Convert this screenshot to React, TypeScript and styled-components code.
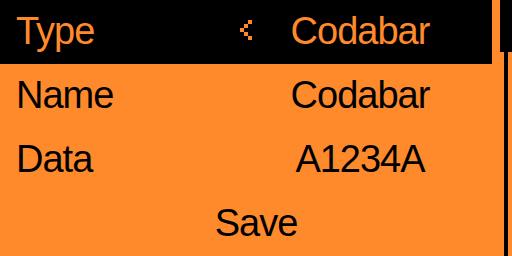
import * as React from 'react'
import styled, { createGlobalStyle, css } from 'styled-components'

const ORANGE = '#fe8a2c'
const BLACK = '#000000'

const GlobalStyle = createGlobalStyle`
	html, body {
		margin: 0;
		padding: 0;
		background: ${ORANGE};
	}
`

const Screen = styled.div`
	width: 512px;
	height: 256px;
	background: ${ORANGE};
	display: flex;
	gap: 8px;
	overflow: hidden;
	font-family: 'Liberation Sans', Arial, sans-serif;
	font-size: 38px;
	letter-spacing: -1px;
`

const List = styled.div`
	width: 492px;
	display: flex;
	flex-direction: column;
`

interface RowProps {
	selected?: boolean
}

const Row = styled.div`
	height: 64px;
	display: flex;
	align-items: stretch;
	line-height: 62px;
	${({ selected }: RowProps) => css`
		background: ${selected ? BLACK : 'transparent'};
		color: ${selected ? ORANGE : BLACK};
	`}
`

const Label = styled.div`
	width: 224px;
	padding-left: 16px;
	white-space: nowrap;
`

const ArrowSlot = styled.div`
	width: 12px;
	display: flex;
	align-items: flex-start;
	padding-top: 20px;
`

const Value = styled.div`
	width: 216px;
	text-align: center;
	white-space: nowrap;
`

const Action = styled.div`
	flex: 1;
	text-align: center;
	padding-left: 20px;
	white-space: nowrap;
`

const Scrollbar = styled.div`
	width: 12px;
	display: flex;
	flex-direction: column;
	align-items: center;
`

const Thumb = styled.div`
	width: 12px;
	height: 52px;
	background: ${BLACK};
`

const Track = styled.div`
	width: 4px;
	flex: 1;
	background: ${BLACK};
`

const LeftArrow = () => (
	<svg width="12" height="20" viewBox="0 0 12 20" shapeRendering="crispEdges">
		<rect x="8" y="0" width="4" height="4" fill={ORANGE} />
		<rect x="4" y="4" width="4" height="4" fill={ORANGE} />
		<rect x="0" y="8" width="4" height="4" fill={ORANGE} />
		<rect x="4" y="12" width="4" height="4" fill={ORANGE} />
		<rect x="8" y="16" width="4" height="4" fill={ORANGE} />
	</svg>
)

export default function App() {
	return (
		<>
			<GlobalStyle />
			<Screen>
				<List>
					<Row selected>
						<Label>Type</Label>
						<ArrowSlot>
							<LeftArrow />
						</ArrowSlot>
						<Value>Codabar</Value>
					</Row>
					<Row>
						<Label>Name</Label>
						<ArrowSlot />
						<Value>Codabar</Value>
					</Row>
					<Row>
						<Label>Data</Label>
						<ArrowSlot />
						<Value>A1234A</Value>
					</Row>
					<Row>
						<Action>Save</Action>
					</Row>
				</List>
				<Scrollbar>
					<Thumb />
					<Track />
				</Scrollbar>
			</Screen>
		</>
	)
}
